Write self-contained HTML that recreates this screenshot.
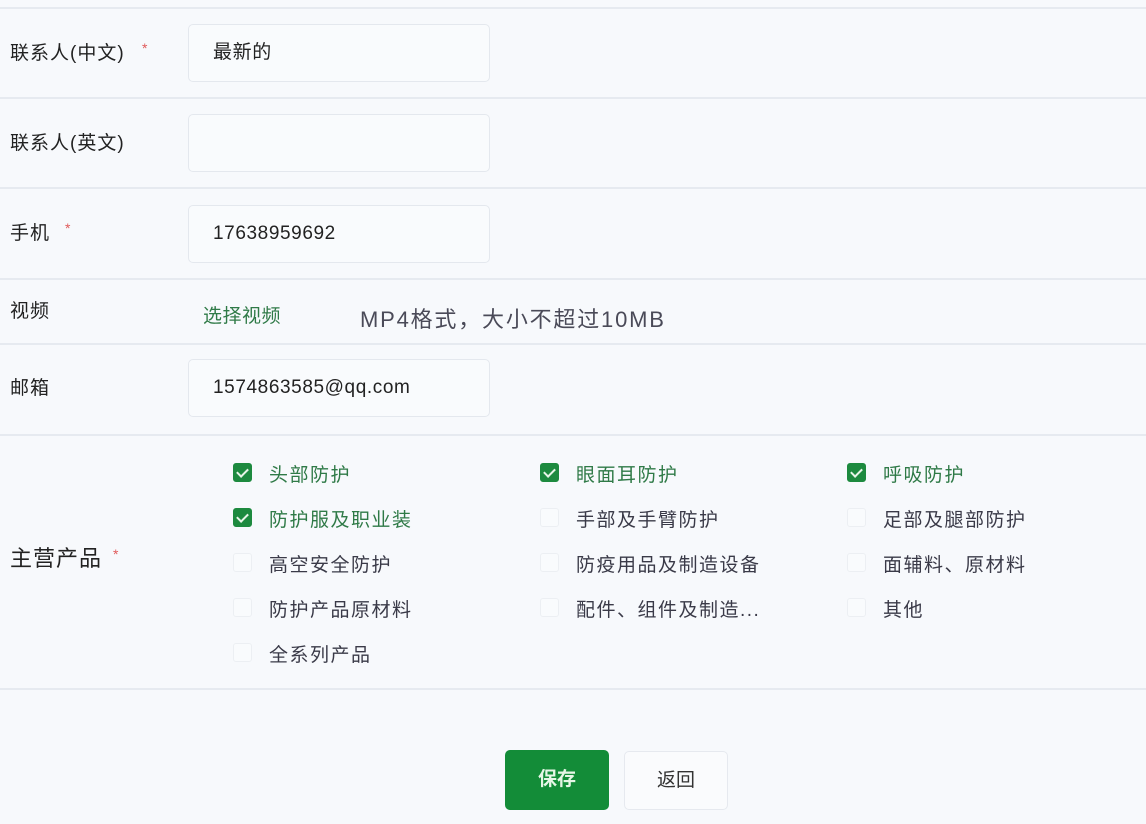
<!DOCTYPE html>
<html><head><meta charset="utf-8"><style>
*{margin:0;padding:0;box-sizing:border-box}
body{width:1146px;height:824px;background:#f7f9fc;font-family:"Liberation Sans","Noto Sans CJK SC",sans-serif;color:#2a2a33;position:relative;overflow:hidden}
.a{position:absolute;white-space:nowrap}
.line{position:absolute;left:0;width:1146px;height:2px;background:#e6eaf0}
.lbl{font-size:19px;color:#222;letter-spacing:1px}
.star{color:#e05a5a;font-size:14px}
.inp{position:absolute;left:188px;width:302px;height:58px;border:1px solid #e4e8ee;border-radius:5px;background:#f9fbfd;font-size:19px;letter-spacing:0.6px;padding-left:24px;line-height:56px;color:#222}
.cb{position:absolute;width:19px;height:19px;border:1px solid #eceff3;border-radius:3px;background:#f9fbfd}
.cb.on{background:#1d8a3f;border-color:#1d8a3f}
.cb.on:after{content:"";position:absolute;left:5px;top:2px;width:5px;height:9px;border:solid #e8f5e8;border-width:0 2px 2px 0;transform:rotate(45deg)}
.ct{position:absolute;font-size:19px;letter-spacing:1.5px;color:#3a3a48;white-space:nowrap}
.ct.g{color:#2f7a47}
</style></head><body>
<div class="line" style="top:7px"></div>
<div class="line" style="top:97px"></div>
<div class="line" style="top:187px"></div>
<div class="line" style="top:278px"></div>
<div class="line" style="top:343px"></div>
<div class="line" style="top:434px"></div>
<div class="line" style="top:688px"></div>

<div class="a lbl" style="left:10px;top:38px">联系人(中文)</div><div class="a star" style="left:142px;top:40px">*</div>
<div class="inp" style="top:24px">最新的</div>
<div class="a lbl" style="left:10px;top:128px">联系人(英文)</div>
<div class="inp" style="top:114px"></div>
<div class="a lbl" style="left:10px;top:218px">手机</div><div class="a star" style="left:65px;top:220px">*</div>
<div class="inp" style="top:205px">17638959692</div>
<div class="a lbl" style="left:10px;top:296px">视频</div>
<div class="a" style="left:203px;top:301px;font-size:19px;color:#2f7a47;letter-spacing:0.5px">选择视频</div>
<div class="a" style="left:360px;top:302px;font-size:22px;letter-spacing:1.8px;color:#4a4a58">MP4格式，大小不超过10MB</div>
<div class="a lbl" style="left:10px;top:373px">邮箱</div>
<div class="inp" style="top:359px">1574863585@qq.com</div>
<div class="a lbl" style="left:10px;top:541px;font-size:22px">主营产品</div><div class="a star" style="left:113px;top:546px">*</div>

<div class="cb on" style="left:233px;top:463px"></div><div class="ct g" style="left:269px;top:460px">头部防护</div>
<div class="cb on" style="left:540px;top:463px"></div><div class="ct g" style="left:576px;top:460px">眼面耳防护</div>
<div class="cb on" style="left:847px;top:463px"></div><div class="ct g" style="left:883px;top:460px">呼吸防护</div>
<div class="cb on" style="left:233px;top:508px"></div><div class="ct g" style="left:269px;top:505px">防护服及职业装</div>
<div class="cb" style="left:540px;top:508px"></div><div class="ct" style="left:576px;top:505px">手部及手臂防护</div>
<div class="cb" style="left:847px;top:508px"></div><div class="ct" style="left:883px;top:505px">足部及腿部防护</div>
<div class="cb" style="left:233px;top:553px"></div><div class="ct" style="left:269px;top:550px">高空安全防护</div>
<div class="cb" style="left:540px;top:553px"></div><div class="ct" style="left:576px;top:550px">防疫用品及制造设备</div>
<div class="cb" style="left:847px;top:553px"></div><div class="ct" style="left:883px;top:550px">面辅料、原材料</div>
<div class="cb" style="left:233px;top:598px"></div><div class="ct" style="left:269px;top:595px">防护产品原材料</div>
<div class="cb" style="left:540px;top:598px"></div><div class="ct" style="left:576px;top:595px">配件、组件及制造...</div>
<div class="cb" style="left:847px;top:598px"></div><div class="ct" style="left:883px;top:595px">其他</div>
<div class="cb" style="left:233px;top:643px"></div><div class="ct" style="left:269px;top:640px">全系列产品</div>

<div class="a" style="left:505px;top:750px;width:104px;height:60px;background:#138c38;border-radius:5px;color:#e6f6e6;font-size:19px;font-weight:bold;text-align:center;line-height:60px">保存</div>
<div class="a" style="left:624px;top:751px;width:104px;height:59px;background:#fafbfd;border:1px solid #e6e9ef;border-radius:5px;color:#333;font-size:19px;text-align:center;line-height:57px">返回</div>
</body></html>
